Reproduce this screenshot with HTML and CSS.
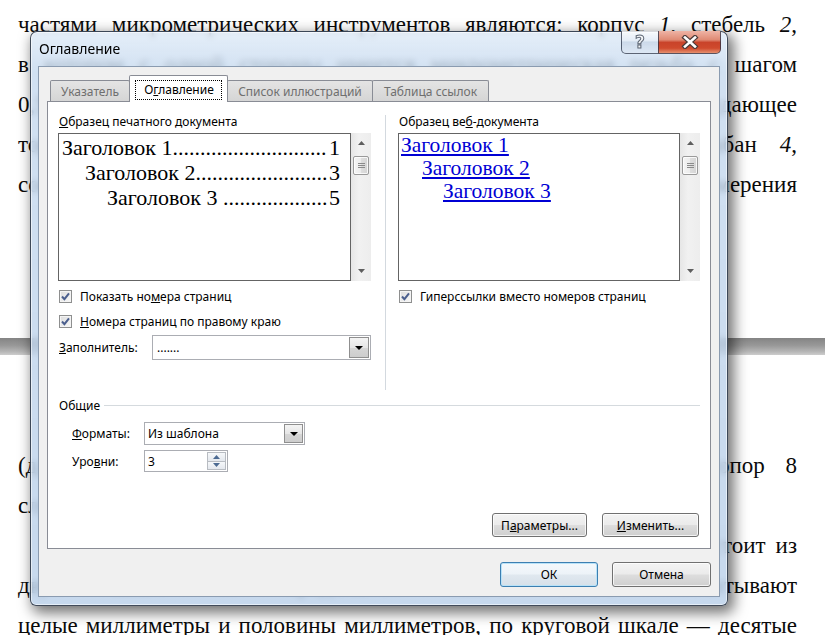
FILE: index.html
```html
<!DOCTYPE html>
<html lang="ru">
<head>
<meta charset="utf-8">
<title>Оглавление</title>
<link rel="stylesheet" href="styles.css">
</head>
<body>
<div class="doc">
  <div class="page page-1">
    <div class="ln">частями микрометрических инструментов являются: корпус <i>1</i>, стебель <i>2</i>,</div>
    <div class="ln">в котором с одной стороны имеется микрометрическая резьба с шагом</div>
    <div class="ln">0,5 мм, микрометрический винт <i>3</i>, трещотка <i>5</i>, передающее</div>
    <div class="ln">торцу винта измерительное усилие, установочная гайка, барабан <i>4</i>,</div>
    <div class="ln">соединённый с микровинтом, и пятка, являющаяся базой для измерения</div>
  </div>
  <div class="page-gap"></div>
  <div class="page page-2">
    <div class="ln">(для микрометров с верхним пределом свыше 25 мм) и стопор 8</div>
    <div class="ln ln-last">служит для закрепления винта.</div>
    <div class="ln ln-indent">Отсчётное устройство всех микрометрических инструментов состоит из</div>
    <div class="ln">двух шкал: по продольной шкале стебля отсчитывают</div>
    <div class="ln">целые миллиметры и половины миллиметров, по круговой шкале — десятые</div>
  </div>
</div>

<div class="dialog">
  <div class="titlebar">
    <div class="title">Оглавление</div>
    <div class="caps">
      <div class="cap cap-help"><span class="help-glyph">?</span></div>
      <div class="cap cap-close">
        <svg width="18" height="14" viewBox="0 0 18 14"><path d="M4 2.5L14 11.5M14 2.5L4 11.5" stroke="#4a3a38" stroke-width="5" stroke-linecap="square" fill="none"/><path d="M4 2.5L14 11.5M14 2.5L4 11.5" stroke="#ffffff" stroke-width="2.6" stroke-linecap="square" fill="none"/></svg>
      </div>
    </div>
  </div>
  <div class="client">
    <div class="tabstrip">
      <div class="tab tab-w1">Указатель</div>
      <div class="tab tab-active tab-w2"><span class="focus">О<u>г</u>лавление</span></div>
      <div class="tab tab-w3">Список иллюстраций</div>
      <div class="tab tab-w4">Таблица ссылок</div>
    </div>
    <div class="panel">
      <div class="top">
        <div class="col col-left">
          <div class="pv-label"><u>О</u>бразец печатного документа</div>
          <div class="pv">
            <div class="pv-box print">
              <div class="toc"><span>Заголовок 1............................</span><span>1</span></div>
              <div class="toc toc-2"><span>Заголовок 2........................</span><span>3</span></div>
              <div class="toc toc-3"><span>Заголовок 3 ...................</span><span>5</span></div>
            </div>
            <div class="sb">
              <div class="sb-arrow"><svg width="7" height="4" viewBox="0 0 7 4"><path d="M0 4h7L3.5 0z" fill="#5e5e5e"/></svg></div>
              <div class="sb-thumb"><svg width="7" height="6" viewBox="0 0 7 6"><path d="M0 .5h7M0 2.5h7M0 4.5h7" stroke="#8a8a8a" stroke-width="1"/></svg></div>
              <div class="sb-space"></div>
              <div class="sb-arrow"><svg width="7" height="4" viewBox="0 0 7 4"><path d="M0 0h7L3.5 4z" fill="#5e5e5e"/></svg></div>
            </div>
          </div>
          <div class="chk chk-1">
            <span class="cb"><svg width="11" height="11" viewBox="0 0 11 11"><path d="M2 5.5l2.4 2.6L9 2.4" fill="none" stroke="#4b5f8e" stroke-width="2"/></svg></span>
            <span>Показать но<u>м</u>ера страниц</span>
          </div>
          <div class="chk chk-2">
            <span class="cb"><svg width="11" height="11" viewBox="0 0 11 11"><path d="M2 5.5l2.4 2.6L9 2.4" fill="none" stroke="#4b5f8e" stroke-width="2"/></svg></span>
            <span><u>Н</u>омера страниц по правому краю</span>
          </div>
          <div class="combo-row">
            <div class="combo-label"><u>З</u>аполнитель:</div>
            <div class="combo">
              <span class="combo-val">.......</span>
              <span class="combo-btn"><svg width="8" height="4" viewBox="0 0 8 4"><path d="M0 0h8L4 4z" fill="#000"/></svg></span>
            </div>
          </div>
        </div>
        <div class="vsep"></div>
        <div class="col col-right">
          <div class="pv-label">Образец ве<u>б</u>-документа</div>
          <div class="pv">
            <div class="pv-box web">
              <a class="lnk">Заголовок 1</a>
              <a class="lnk lnk-2">Заголовок 2</a>
              <a class="lnk lnk-3">Заголовок 3</a>
            </div>
            <div class="sb">
              <div class="sb-arrow"><svg width="7" height="4" viewBox="0 0 7 4"><path d="M0 4h7L3.5 0z" fill="#5e5e5e"/></svg></div>
              <div class="sb-thumb"><svg width="7" height="6" viewBox="0 0 7 6"><path d="M0 .5h7M0 2.5h7M0 4.5h7" stroke="#8a8a8a" stroke-width="1"/></svg></div>
              <div class="sb-space"></div>
              <div class="sb-arrow"><svg width="7" height="4" viewBox="0 0 7 4"><path d="M0 0h7L3.5 4z" fill="#5e5e5e"/></svg></div>
            </div>
          </div>
          <div class="chk chk-1">
            <span class="cb"><svg width="11" height="11" viewBox="0 0 11 11"><path d="M2 5.5l2.4 2.6L9 2.4" fill="none" stroke="#4b5f8e" stroke-width="2"/></svg></span>
            <span>Гиперссылки вместо номеров страниц</span>
          </div>
        </div>
      </div>

      <div class="group-head"><span>Общие</span><span class="group-line"></span></div>
      <div class="field-row row-fmt">
        <div class="field-label"><u>Ф</u>орматы:</div>
        <div class="combo combo-fmt">
          <span class="combo-val">Из шаблона</span>
          <span class="combo-btn"><svg width="8" height="4" viewBox="0 0 8 4"><path d="M0 0h8L4 4z" fill="#000"/></svg></span>
        </div>
      </div>
      <div class="field-row row-lvl">
        <div class="field-label">Уро<u>в</u>ни:</div>
        <div class="spin">
          <span class="spin-val">3</span>
          <span class="spin-btns">
            <span class="spin-btn"><svg width="7" height="4" viewBox="0 0 7 4"><path d="M0 4h7L3.5 0z" fill="#4c6a92"/></svg></span>
            <span class="spin-btn"><svg width="7" height="4" viewBox="0 0 7 4"><path d="M0 0h7L3.5 4z" fill="#4c6a92"/></svg></span>
          </span>
        </div>
      </div>

      <div class="panel-btns">
        <div class="btn btn-params">П<u>а</u>раметры...</div>
        <div class="btn btn-change"><u>И</u>зменить...</div>
      </div>
    </div>
    <div class="footer">
      <div class="btn btn-ok">ОК</div>
      <div class="btn btn-cancel">Отмена</div>
    </div>
  </div>
</div>
</body>
</html>
```

FILE: styles.css
```css
* { box-sizing: border-box; }

html, body {
  margin: 0;
  padding: 0;
}

body {
  width: 825px;
  height: 635px;
  overflow: hidden;
  background: #ffffff;
  position: relative;
  font-family: "Liberation Serif", "Times New Roman", serif;
}

/* ---------- background document ---------- */
.doc {
  padding: 0 28px 0 18px;
}

.page-1 { padding-top: 5px; }
.page-2 { padding-top: 91px; }

.ln {
  height: 40px;
  line-height: 40px;
  font-size: 23px;
  color: #0a0a0a;
  white-space: nowrap;
  text-align: justify;
  text-align-last: justify;
}

.ln-last { text-align-last: left; }
.ln-indent { padding-left: 42px; }

.page-gap {
  margin: 133px -28px 0 -18px;
  height: 17px;
  background: linear-gradient(#848484, #999999 45%, #b6b6b6 80%, #cdcdcd);
}

/* ---------- dialog frame ---------- */
.dialog {
  position: absolute;
  left: 30px;
  top: 31px;
  width: 698px;
  height: 575px;
  display: flex;
  flex-direction: column;
  border: 1px solid rgba(25, 35, 50, 0.8);
  border-radius: 7px 7px 6px 6px;
  background: linear-gradient(180deg, rgba(222, 234, 247, 0.80) 0%, rgba(196, 216, 238, 0.78) 40px, rgba(186, 208, 233, 0.82) 100%);
  -webkit-backdrop-filter: blur(3px);
  backdrop-filter: blur(3px);
  box-shadow: inset 0 0 0 1px rgba(255, 255, 255, 0.55), 4px 5px 14px 2px rgba(0, 0, 0, 0.55);
  font-family: "Noto Sans", "DejaVu Sans", sans-serif;
  color: #000;
}

.titlebar {
  height: 34px;
  display: flex;
  align-items: flex-start;
}

.title {
  padding: 7px 0 0 8px;
  font-size: 14px;
  line-height: 20px;
}

.caps {
  margin-left: auto;
  margin-right: 6px;
  margin-top: -1px;
  display: flex;
}

.cap {
  height: 23px;
  display: flex;
  align-items: center;
  justify-content: center;
  border: 1px solid rgba(40, 50, 70, 0.75);
  border-top: none;
}

.cap-help {
  width: 37px;
  border-right: none;
  border-radius: 0 0 0 5px;
  background: linear-gradient(rgba(255, 255, 255, 0.8), rgba(228, 236, 246, 0.7) 45%, rgba(196, 210, 228, 0.7) 50%, rgba(222, 232, 244, 0.8));
}

.help-glyph {
  font-family: "DejaVu Sans", sans-serif;
  font-weight: bold;
  font-size: 17px;
  line-height: 17px;
  color: #f4f6f8;
  -webkit-text-stroke: 1px #5d6674;
}

.cap-close {
  width: 63px;
  border-radius: 0 0 5px 0;
  background: linear-gradient(#efb4a5 0%, #df8a74 40%, #c9432a 52%, #cf4a2d 78%, #e6906f 100%);
}

/* ---------- client area ---------- */
.client {
  flex: 1;
  margin: 0 7px 8px;
  background: #f0f0f0;
  border: 1px solid #8a9bb0;
  padding: 8px 8px 9px;
  display: flex;
  flex-direction: column;
  font-size: 12px;
}

.tabstrip {
  height: 26px;
  display: flex;
  align-items: flex-end;
  padding-left: 3px;
  position: relative;
  z-index: 1;
}

.tab {
  height: 21px;
  margin-left: -1px;
  border: 1px solid #898c95;
  border-bottom: none;
  border-radius: 2px 2px 0 0;
  background: linear-gradient(#e4e4e4, #d5d5d5);
  color: #6f6f6f;
  display: flex;
  align-items: center;
  justify-content: center;
  white-space: nowrap;
}

.tab:first-child { margin-left: 0; }

.tab-w1 { width: 80px; }
.tab-w2 { width: 99px; }
.tab-w3 { width: 146px; }
.tab-w4 { width: 117px; }

.tab-active {
  height: 27px;
  margin-bottom: -1px;
  padding-top: 1px;
  background: #ffffff;
  color: #000;
}

.focus {
  border: 1px dotted #000;
  padding: 0 7px 1px 8px;
  line-height: 17px;
}

.panel {
  height: 448px;
  flex: none;
  border: 1px solid #898c95;
  background: #ffffff;
  padding: 11px 10px 11px 10px;
  display: flex;
  flex-direction: column;
}

.top {
  height: 277px;
  display: flex;
}

.col-left { width: 313px; }
.col-right { flex: 1; }

.vsep {
  width: 1px;
  margin: 2px 12px 0 14px;
  background: #d3d9df;
}

.pv-label {
  height: 17px;
  line-height: 17px;
  padding-left: 1px;
  white-space: nowrap;
}

.pv {
  height: 148px;
  margin-top: 3px;
  display: flex;
}

.pv-box {
  flex: 1;
  border: 1px solid #646464;
  background: #fff;
  overflow: hidden;
  font-family: "Liberation Serif", "Times New Roman", serif;
}

.print { padding: 1px 10px 0 3px; }

.toc {
  display: flex;
  justify-content: space-between;
  font-size: 22px;
  line-height: 25px;
  white-space: nowrap;
  color: #000;
}

.toc-2 { padding-left: 23px; }
.toc-3 { padding-left: 45px; }

.web { padding: 0 0 0 2px; }

.lnk {
  display: block;
  width: max-content;
  font-size: 21.5px;
  line-height: 23px;
  color: #0000d4;
  text-decoration: underline;
  text-underline-offset: 2px;
}

.lnk-2 { margin-left: 21px; }
.lnk-3 { margin-left: 42px; }

.sb {
  width: 20px;
  background: linear-gradient(90deg, #e6e6e6, #f1f1f1 40%, #ededed);
  display: flex;
  flex-direction: column;
}

.sb-arrow {
  height: 20px;
  display: flex;
  align-items: center;
  justify-content: center;
}

.sb-thumb {
  height: 19px;
  margin: 3px 2px 0;
  border: 1px solid #9a9a9a;
  border-radius: 2px;
  background: linear-gradient(90deg, #f5f5f5, #ececec 50%, #dedede 50%, #d4d4d4);
  box-shadow: inset 0 0 0 1px rgba(255, 255, 255, 0.8);
  display: flex;
  align-items: center;
  justify-content: center;
}

.sb-space { flex: 1; }

/* checkboxes */
.chk {
  height: 18px;
  display: flex;
  align-items: center;
  gap: 8px;
  padding-left: 1px;
  white-space: nowrap;
}

.chk-1 { margin-top: 6px; }
.chk-2 { margin-top: 7px; }

.cb {
  width: 13px;
  height: 13px;
  flex: none;
  border: 1px solid #8e8f8f;
  background: linear-gradient(135deg, #dcdcdc, #f8f8f8);
  box-shadow: inset 0 0 0 1px #f4f4f4;
  display: flex;
  align-items: center;
  justify-content: center;
}

/* combos */
.combo-row {
  margin-top: 5px;
  height: 25px;
  display: flex;
  align-items: center;
}

.combo-label {
  width: 94px;
  padding-left: 1px;
}

.combo {
  flex: 1;
  height: 100%;
  border: 1px solid #abadb3;
  background: #fff;
  display: flex;
  align-items: stretch;
}

.combo-val {
  flex: 1;
  padding-left: 4px;
  display: flex;
  align-items: center;
}

.combo-btn {
  width: 20px;
  margin: 1px;
  border: 1px solid #8f8f8f;
  background: linear-gradient(#f4f4f4, #e6e6e6 50%, #d6d6d6 51%, #cdcdcd);
  display: flex;
  align-items: center;
  justify-content: center;
}

/* general group */
.group-head {
  margin-top: 7px;
  height: 16px;
  display: flex;
  align-items: center;
  gap: 4px;
  padding-left: 1px;
}

.group-line {
  flex: 1;
  height: 1px;
  background: #d5dade;
}

.field-row {
  margin-left: 14px;
  display: flex;
  align-items: center;
}

.row-fmt { margin-top: 9px; height: 23px; }
.row-lvl { margin-top: 5px; height: 22px; }

.field-label { width: 72px; }

.combo-fmt { flex: none; width: 161px; }
.combo-fmt .combo-val { padding-left: 3px; }
.combo-fmt .combo-btn { width: 19px; }

.spin {
  width: 84px;
  height: 100%;
  border: 1px solid #abadb3;
  background: #fff;
  display: flex;
}

.spin-val {
  flex: 1;
  padding-left: 3px;
  display: flex;
  align-items: center;
}

.spin-btns {
  width: 19px;
  margin: 1px;
  display: flex;
  flex-direction: column;
}

.spin-btn {
  flex: 1;
  border: 1px solid #b8bcc2;
  background: linear-gradient(#f6f8fa, #e4e8ee);
  display: flex;
  align-items: center;
  justify-content: center;
}

.spin-btn + .spin-btn { border-top: none; }

/* buttons */
.panel-btns {
  margin-top: 41px;
  display: flex;
  justify-content: flex-end;
  gap: 15px;
  padding-right: 1px;
}

.btn {
  height: 24px;
  border: 1px solid #707070;
  border-radius: 3px;
  background: linear-gradient(#f3f3f3 0%, #ebebeb 48%, #dddddd 52%, #cfcfcf 100%);
  box-shadow: inset 0 0 0 1px rgba(255, 255, 255, 0.75);
  display: flex;
  align-items: center;
  justify-content: center;
  white-space: nowrap;
}

.btn-params { width: 95px; }
.btn-change { width: 97px; }

.footer {
  margin-top: 13px;
  display: flex;
  justify-content: flex-end;
  gap: 14px;
}

.footer .btn { height: 25px; }

.btn-ok {
  width: 98px;
  border-color: #3c7fb1;
  background: linear-gradient(#f4f8fb 0%, #edf3f8 48%, #e0e8ef 52%, #d6e0e9 100%);
  box-shadow: inset 0 0 0 1px #b8e2f8;
}

.btn-cancel { width: 99px; }
```
